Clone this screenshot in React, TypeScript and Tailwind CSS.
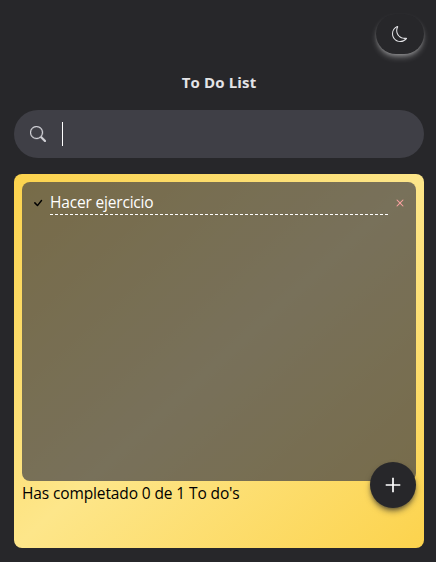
import { useState } from "react";
import { BsCheck, BsMoon, BsSearch, BsX } from "react-icons/bs";

function TodoItem({ text }: { text: string }) {
  return (
    <li className="flex items-center">
      <BsCheck className="h-4 w-4 shrink-0 text-black" />
      <span className="ml-1 h-[25px] flex-1 border-b border-dashed border-white text-[15.5px] leading-6 tracking-[-0.18px] text-white">
        {text}
      </span>
      <BsX className="ml-1 h-4 w-4 shrink-0 text-red-300" />
    </li>
  );
}

export default function App() {
  const [todos] = useState(["Hacer ejercicio"]);
  return (
    <main className="flex h-[562px] w-[436px] flex-col bg-[#27272a] pt-[14px] pr-3 pb-[14px] pl-[14px] font-['Open_Sans','Noto_Sans',sans-serif]">
      <button className="flex h-10 w-12 items-center justify-center self-end rounded-full bg-[#27272a] text-zinc-200 shadow-[0_4px_6px_-1px_rgba(255,255,255,0.36),0_2px_4px_-2px_rgba(255,255,255,0.36)]">
        <BsMoon className="h-4 w-4" />
      </button>
      <h1 className="mt-4 h-6 text-center text-[15px] leading-6 font-bold tracking-[0.15px] text-zinc-200">To Do List</h1>
      <div className="mt-4 flex h-12 shrink-0 items-center rounded-full bg-[#3f3f46] pl-4">
        <BsSearch className="h-4 w-4 stroke-[0.3] stroke-zinc-300 text-zinc-300" />
        <span className="ml-4 h-6 w-px bg-white" />
      </div>
      <section className="relative mt-4 h-[374px] shrink-0 rounded-lg bg-[linear-gradient(to_bottom_right,#fcd34d,#fde68a,#fcd34d)] p-2">
        <ul className="h-[299px] rounded-lg bg-[#3f3f46]/70 p-2">
          {todos.map((todo) => (
            <TodoItem key={todo} text={todo} />
          ))}
        </ul>
        <p className="text-[15.5px] leading-6 tracking-[-0.12px] text-black">Has completado 0 de {todos.length} To do's</p>
        <button className="absolute right-2 bottom-10 flex h-[46px] w-[46px] items-center justify-center rounded-full bg-[#27272a] text-white shadow-md shadow-zinc-800/60">
          <svg className="h-4 w-4" viewBox="0 0 16 16" stroke="currentColor" strokeWidth="1.7" fill="none">
            <path d="M8 .7v14.6M.7 8h14.6" />
          </svg>
        </button>
      </section>
    </main>
  );
}
